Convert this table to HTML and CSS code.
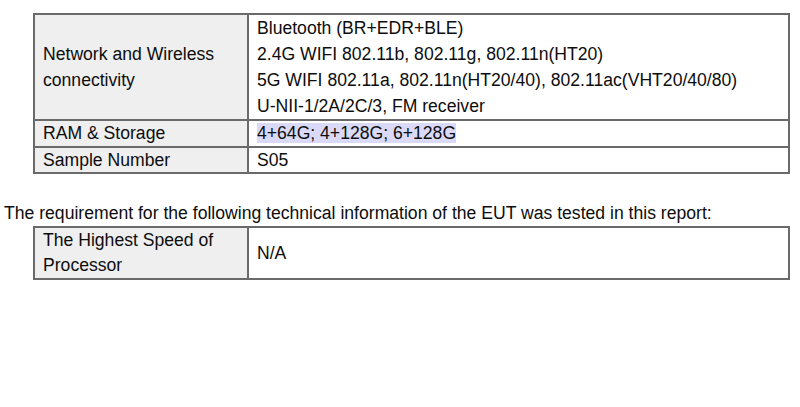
FILE: index.html
```html
<!DOCTYPE html>
<html>
<head>
<meta charset="utf-8">
<link rel="stylesheet" href="styles.css">
</head>
<body>
<div class="page">
  <table class="spec spec-first">
    <tr>
      <td class="label">Network and Wireless<br>connectivity</td>
      <td class="value">Bluetooth (BR+EDR+BLE)<br>2.4G WIFI 802.11b, 802.11g, 802.11n(HT20)<br>5G WIFI 802.11a, 802.11n(HT20/40), 802.11ac(VHT20/40/80)<br>U-NII-1/2A/2C/3, FM receiver</td>
    </tr>
    <tr class="single">
      <td class="label">RAM &amp; Storage</td>
      <td class="value"><span class="mark">4+64G; 4+128G; 6+128G</span></td>
    </tr>
    <tr class="single">
      <td class="label">Sample Number</td>
      <td class="value">S05</td>
    </tr>
  </table>
  <p class="intro">The requirement for the following technical information of the EUT was tested in this report:</p>
  <table class="spec spec-second">
    <tr>
      <td class="label">The Highest Speed of<br>Processor</td>
      <td class="value">N/A</td>
    </tr>
  </table>
</div>
</body>
</html>
```
FILE: styles.css
```css
html, body {
  margin: 0;
  padding: 0;
  background: #ffffff;
}
.page {
  padding: 13px 0 0 4px;
  font-family: "Liberation Sans", Arial, sans-serif;
  font-size: 17.6px;
  line-height: 26px;
  color: #0d0d0d;
}
.spec {
  border-collapse: collapse;
  margin-left: 29px;
  width: 757px;
}
.spec td {
  border: 2px solid #6a6a6a;
  padding: 0 8px;
  vertical-align: middle;
}
.spec .single td {
  line-height: 24.5px;
}
.spec-second td {
  line-height: 25px;
}
.spec td.label {
  width: 196px;
  background: #efefef;
}
.spec td.value {
  background: #ffffff;
}
.mark {
  background: #dadaf8;
}
.intro {
  margin: 26px 0 0 0;
  padding: 0;
}
```
